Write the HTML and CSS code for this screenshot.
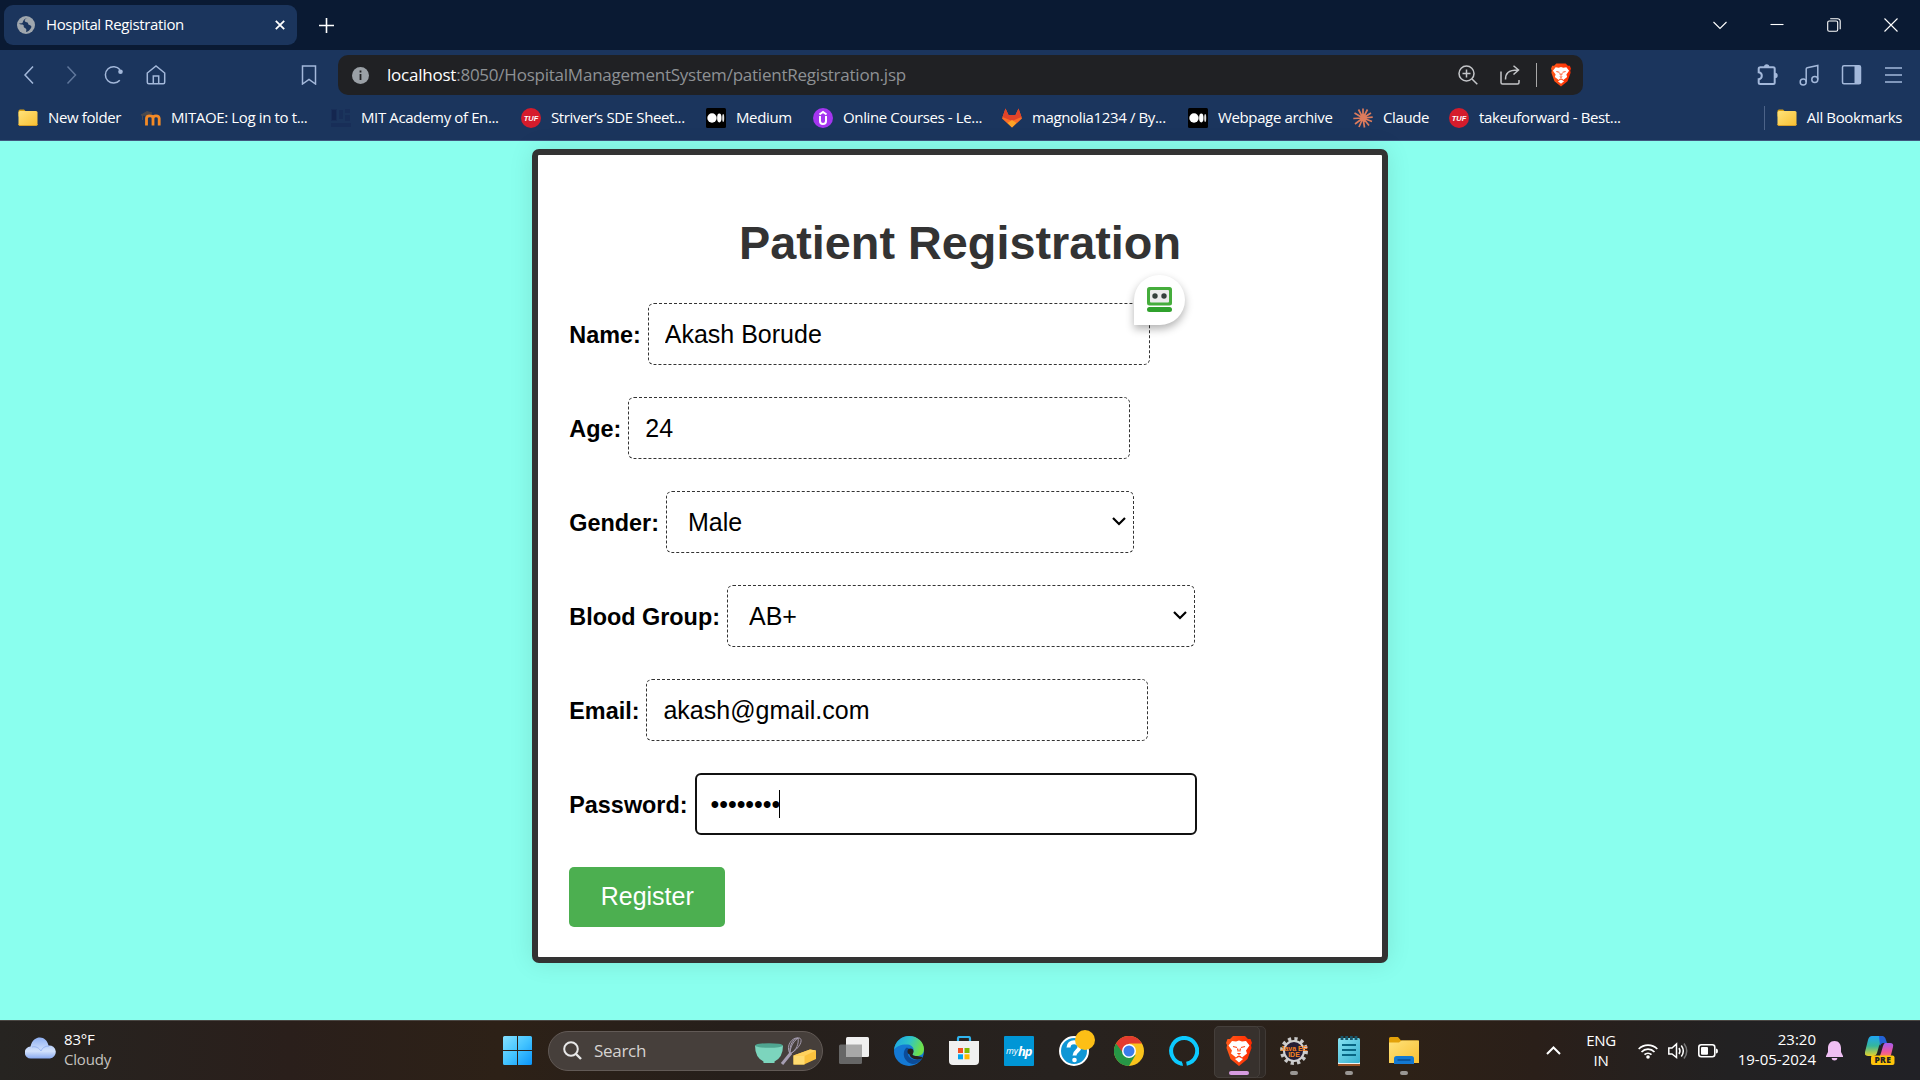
FILE: index.html
```html
<!DOCTYPE html>
<html lang="en">
<head>
<meta charset="utf-8">
<title>Hospital Registration</title>
<link rel="stylesheet" href="styles.css">
</head>
<body>
<svg width="0" height="0" class="defs">
  <defs>
    <linearGradient id="gFolder" x1="0" y1="0" x2="1" y2="1"><stop offset="0" stop-color="#ffe27a"/><stop offset="1" stop-color="#f8c033"/></linearGradient>
    <linearGradient id="gWin" x1="0" y1="0" x2="1" y2="1"><stop offset="0" stop-color="#85e0ff"/><stop offset=".5" stop-color="#44c4ff"/><stop offset="1" stop-color="#0a95fa"/></linearGradient>
    <linearGradient id="gCloud" x1="0" y1="0" x2="0" y2="1"><stop offset="0" stop-color="#8fb0f2"/><stop offset=".65" stop-color="#d3e2fc"/><stop offset="1" stop-color="#8aaaf0"/></linearGradient>
    <linearGradient id="gEdge" x1="0" y1="0" x2="1" y2=".3"><stop offset="0" stop-color="#1aa0e8"/><stop offset=".55" stop-color="#2fc5c8"/><stop offset="1" stop-color="#6de04a"/></linearGradient>
    <linearGradient id="gBrave" x1="0" y1="0" x2="1" y2="0"><stop offset="0" stop-color="#ff5a1a"/><stop offset="1" stop-color="#ff2a00"/></linearGradient>
    <linearGradient id="gNote" x1="0" y1="0" x2="1" y2="1"><stop offset="0" stop-color="#86e2f2"/><stop offset="1" stop-color="#37b0ce"/></linearGradient>
    <linearGradient id="gCopA" x1="0" y1="0" x2="0" y2="1"><stop offset="0" stop-color="#1fa6f5"/><stop offset=".5" stop-color="#35b69b"/><stop offset="1" stop-color="#e8d22a"/></linearGradient>
    <linearGradient id="gCopB" x1="0" y1="0" x2="0" y2="1"><stop offset="0" stop-color="#a45cf0"/><stop offset=".6" stop-color="#f0569a"/><stop offset="1" stop-color="#ff8a4c"/></linearGradient>
    <symbol id="folder" viewBox="0 0 20 20"><path d="M.5 3a1.500 1.500 0 0 1 1.500-1.500h4l2 2h10v5H.5z" fill="#d9a012"/><rect x=".5" y="3" width="19" height="14.500" rx="1.500" fill="url(#gFolder)"/><path d="M.5 16q0 1.500 1.500 1.500h16q1.500 0 1.500-1.500" fill="none" stroke="#d9a12a"/></symbol>
    <symbol id="medium" viewBox="0 0 20 20"><rect width="20" height="20" rx="1.500" fill="#000"/><circle cx="6" cy="10" r="4.700" fill="#fff"/><ellipse cx="13.300" cy="10" rx="2.200" ry="4.400" fill="#fff"/><ellipse cx="17.200" cy="10" rx="1" ry="3.900" fill="#ddd"/></symbol>
    <symbol id="lion" viewBox="0 0 26 30"><path d="M7 0h12l3 3 2.500 0 1.500 4-1 2 .5 3-4 11-8.500 7-8.500-7-4-11 .5-3-1-2 1.500-4L4 3z" fill="url(#gBrave)"/><path d="M6 5l4 .500 3-.900 3 .900 4-.500 3.500 4.500-3.500 5 1 3-5 4-1.500-1.500-1.500-.600-1.500.600L10 21.500l-5-4 1-3-3.500-5zM9 23l4-2 4 2-4 3.500z" fill="#fff"/><path d="M7 10.500l4 1M19 10.500l-4 1M11.500 12.500l.8 3M14.500 12.500l-.8 3" fill="none" stroke="#ff4718" stroke-width="1.200"/><path d="M10.800 17h4.400L13 19z" fill="#ff4718"/></symbol>
  </defs>
</svg>

<header class="tabs">
  <div class="tab">
    <svg class="globe" width="18" height="18" viewBox="0 0 18 18"><circle cx="9" cy="9" r="9" fill="#9fa6ad"/><path d="M10.500 2C8.500 2.500 7 4 8 5.500c1 1 2.500.3 3 1.500.3 1 .2 1.700 1.500 2 1.500.3 2.500 1.500 1.500 3-1 1.700-2.500 3.500-5 4 .3-1.500.8-2.500-.3-3.500-1-.8-2.200-1-2-2.500.2-1-.7-1.500-2-1.500-1.200 0-2.200-.3-3-1 1.500-.2 3.300.2 4-1C6.200 5 7 2.500 10.500 2z" fill="#1b355d"/></svg>
    <span class="tab-title ui">Hospital Registration</span>
    <svg class="tab-close" width="10" height="10" viewBox="0 0 10 10"><path d="M.8.8l8.400 8.400M9.200.8L.8 9.200" stroke="#fff" stroke-width="1.800"/></svg>
  </div>
  <svg class="plus" width="15" height="15" viewBox="0 0 15 15"><path d="M7.500 0v15M0 7.500h15" stroke="#fff" stroke-width="1.600"/></svg>
  <div class="window-buttons">
    <svg width="14" height="14" viewBox="0 0 14 14"><path d="M.5 4L7 10.500 13.500 4"/></svg>
    <svg width="14" height="14" viewBox="0 0 14 14"><path d="M.5 6.500h13"/></svg>
    <svg width="14" height="14" viewBox="0 0 14 14"><rect x=".7" y="3" width="10" height="10.300" rx="1.500"/><path d="M3.200.7h7.500a2.500 2.500 0 0 1 2.500 2.500v8"/></svg>
    <svg width="14" height="14" viewBox="0 0 14 14"><path d="M.5.5l13 13M13.500.5l-13 13"/></svg>
  </div>
</header>

<nav class="toolbar">
  <div class="nav-icons">
    <svg width="20" height="20" viewBox="0 0 20 20"><path d="M13 1.500L5 10l8 8.500"/></svg>
    <svg class="dim" width="20" height="20" viewBox="0 0 20 20"><path d="M5.500 1.500l8 8.500-8 8.500"/></svg>
    <svg width="20" height="20" viewBox="0 0 20 20"><path d="M15.800 15.200a8.200 8.200 0 1 1 .200-10.500"/><circle cx="16.500" cy="6.800" r="2.300" fill="#a3b8da" stroke="none"/></svg>
    <svg width="20" height="20" viewBox="0 0 20 20"><path d="M1.300 8L10 1l8.700 7v9.200q0 1.500-1.500 1.500H2.800q-1.500 0-1.500-1.500zM7.300 18.500v-7.500h5.400v7.500"/></svg>
  </div>
  <svg class="mark" width="16" height="20" viewBox="0 0 16 20"><path d="M1.500 1h13v18L8 14.500 1.500 19z"/></svg>
  <div class="address">
    <svg width="17" height="17" viewBox="0 0 17 17"><circle cx="8.500" cy="8.500" r="8.500" fill="#9aa0a6"/><path d="M8.500 7v6M8.500 3.500v2" stroke="#202124" stroke-width="1.800"/></svg>
    <span class="url ui"><b>localhost</b>:8050/HospitalManagementSystem/patientRegistration.jsp</span>
    <div class="address-actions">
      <svg width="20" height="20" viewBox="0 0 20 20"><circle cx="8.500" cy="8.500" r="7.500"/><path d="M14 14l5.300 5.300M8.500 4.500v8M4.500 8.500h8"/></svg>
      <svg width="20" height="20" viewBox="0 0 20 20"><path d="M1 6.500V17.500q0 1.500 1.500 1.500H17.500q1.500 0 1.500-1.500v-2.500M5.500 14.500C5.500 8.500 8 5 18 5M13.500.8L18.500 5l-5 4.500"/></svg>
      <i class="divider"></i>
      <svg class="shield" width="20" height="24"><use href="#lion"/></svg>
    </div>
  </div>
  <div class="tools">
    <svg width="21" height="22" viewBox="0 0 21 22"><path d="M3 3.200H16.200Q17.700 3.200 17.700 4.700V18.500Q17.700 20 16.200 20H3.200Q1.700 20 1.700 18.500V15.200Q4.800 14.800 4.800 11.800T1.700 8.300V4.700Q1.700 3.200 3.200 3.200z" stroke-width="2"/><path d="M7 3a2.700 2.700 0 0 1 5.400 0zM18 8.700a2.700 2.700 0 0 1 0 5.400z" fill="#a3b8da" stroke="none"/></svg>
    <svg width="21" height="22" viewBox="0 0 21 22"><circle cx="4.200" cy="18" r="3"/><circle cx="15.800" cy="15.500" r="3"/><path d="M7.200 18V5Q7.200 4 8.200 3.700L18.800 1.500v14"/></svg>
    <svg width="21" height="22" viewBox="0 0 21 22"><rect x="1.500" y="1.800" width="18" height="18" rx="1.500"/><path d="M13.500 1.500h4.500q2 0 2 2v14.500q0 2-2 2h-4.500z" fill="#a3b8da" stroke="none"/></svg>
    <svg width="21" height="22" viewBox="0 0 21 22"><path d="M2 4h17M2 11h17M2 18h17"/></svg>
  </div>
</nav>

<nav class="bookmarks ui">
  <a class="bm"><svg><use href="#folder"/></svg><span>New folder</span></a>
  <a class="bm"><svg viewBox="0 0 20 20"><path d="M0 7l6-3.500L11 5 5.500 7.500zM1.500 7v5" fill="#4a4a4f" stroke="#4a4a4f"/><path d="M5.500 17.500V10.500q0-2.700 3.200-2.700h.600q2.700 0 2.700 2.700V17.500M12 10.500q0-2.700 3-2.700t3.200 2.700V17.500" fill="none" stroke="#f48a26" stroke-width="2.800"/></svg><span>MITAOE: Log in to t...</span></a>
  <a class="bm"><svg viewBox="0 0 20 20"><path d="M0 1h6v12H0zM8 2h4v9H8zM14 1h5v4h-5zM14 7h5v6h-5zM0 15h20v4H0z" fill="#182e58"/><path d="M1 2h4v10H1z" fill="#14264f"/></svg><span>MIT Academy of En...</span></a>
  <a class="bm"><svg viewBox="0 0 20 20"><circle cx="10" cy="10" r="10" fill="#d51c2c"/><text x="10" y="12.500" class="tuf">TUF</text></svg><span>Striver’s SDE Sheet...</span></a>
  <a class="bm"><svg><use href="#medium"/></svg><span>Medium</span></a>
  <a class="bm"><svg viewBox="0 0 20 20"><circle cx="10" cy="10" r="10" fill="#a435f0"/><path d="M7 8v5q0 3 3 3t3-3V8M6.500 6.500L10 4l3.500 2.500" fill="none" stroke="#fff" stroke-width="2"/></svg><span>Online Courses - Le...</span></a>
  <a class="bm"><svg viewBox="0 0 20 20"><path d="M3.500.5l3 6.500h7l3-6.500L20 10.500 10 19.500 0 10.500z" fill="#fc6d26"/><path d="M3.500.5l3 6.500h7l3-6.500L19.500 9 10 13 .5 9z" fill="#e24329"/><path d="M5.500 15L10 12l4.500 3L10 19.500z" fill="#fca326"/></svg><span>magnolia1234 / By...</span></a>
  <a class="bm"><svg><use href="#medium"/></svg><span>Webpage archive</span></a>
  <a class="bm"><svg viewBox="0 0 20 20"><path d="M10 10V.5M10 10l4.500-8.500M10 10l8-5M10 10l9.700-.8M10 10l9 3.500M10 10l6 7.500M10 10l1.500 9.500M10 10l-4 9M10 10l-8 6M10 10L.3 10.500M10 10L1.500 5M10 10L5.500 1.500" stroke="#dd7b5c" stroke-width="1.700"/></svg><span>Claude</span></a>
  <a class="bm"><svg viewBox="0 0 20 20"><circle cx="10" cy="10" r="10" fill="#d51c2c"/><text x="10" y="12.500" class="tuf">TUF</text></svg><span>takeuforward - Best...</span></a>
  <a class="bm all"><svg><use href="#folder"/></svg><span>All Bookmarks</span></a>
</nav>

<main class="page">
  <form class="card">
    <h1>Patient Registration</h1>
    <div class="row"><label for="name">Name:</label>
      <div class="field-wrap"><input id="name" class="field" type="text" value="Akash Borude">
        <div class="roboform"><svg width="25" height="25" viewBox="0 0 25 25"><rect width="25" height="18.500" rx="2.500" fill="#45ad3c"/><rect x="3" y="3" width="19" height="12.500" rx="1" fill="#ececec"/><circle cx="8" cy="9" r="2.700" fill="#35403c"/><circle cx="17" cy="9" r="2.700" fill="#35403c"/><rect y="20" width="25" height="5" rx="2.500" fill="#2fa12c"/></svg></div>
      </div></div>
    <div class="row"><label for="age">Age:</label><input id="age" class="field" type="text" value="24"></div>
    <div class="row"><label for="gender">Gender:</label><div class="field pick"><select id="gender"><option>Male</option></select><svg width="14" height="9" viewBox="0 0 14 9"><path d="M1 1l6 6 6-6"/></svg></div></div>
    <div class="row"><label for="blood">Blood Group:</label><div class="field pick"><select id="blood"><option>AB+</option></select><svg width="14" height="9" viewBox="0 0 14 9"><path d="M1 1l6 6 6-6"/></svg></div></div>
    <div class="row"><label for="email">Email:</label><input id="email" class="field" type="text" value="akash@gmail.com"></div>
    <div class="row"><label>Password:</label><div class="field focused"><span>••••••••</span><i class="caret"></i></div></div>
    <button type="button" class="register">Register</button>
  </form>
</main>

<footer class="taskbar ui">
  <div class="weather">
    <svg width="31" height="22" viewBox="0 0 31 22"><path d="M6 21.500a6 6 0 0 1-.5-12C7 3 11 .5 15 .5s7.500 3 8.500 8a6.500 6.500 0 0 1 1.500 13z" fill="url(#gCloud)"/><path d="M7 10c4-1 7 1 9 4 1-3 4-5 8-5" fill="none" stroke="#7d9feb" stroke-width="1" opacity=".6"/></svg>
    <div class="lift"><p>83°F</p><p class="soft">Cloudy</p></div>
  </div>
  <svg class="start" width="30" height="30" viewBox="0 0 30 30"><path d="M1.500 0H14v14H0V1.500Q0 0 1.500 0zM15 0h12.500Q29 0 29 1.500V14H15zM0 15h14v14H1.500Q0 29 0 27.500zM15 15h14v12.500q0 1.500-1.500 1.500H15z" fill="url(#gWin)"/></svg>
  <div class="search">
    <svg width="19" height="19" viewBox="0 0 19 19"><circle cx="8" cy="8" r="6.800" fill="none" stroke="#e8e8e8" stroke-width="2"/><path d="M13 13l5 5" stroke="#e8e8e8" stroke-width="2.400"/></svg>
    <span>Search</span>
    <svg class="baking" width="61" height="28" viewBox="0 0 61 28"><path d="M0 8.500h28q0 12-8.500 16v1.500h-11v-1.500Q0 20.500 0 8.500z" fill="#7cd5bd"/><ellipse cx="14" cy="8.500" rx="13.700" ry="2.300" fill="#4fa590"/><g fill="none" stroke="#a69eb2" stroke-width="1"><path d="M36 16l-9 11" stroke-width="3"/><path d="M35 17C34 8 38 2 43 1s5 8-8 16M35 17c0-7 3-12 8-16M35 17c7-4 9-11 8-16M35 17C30 8 38 0 43 1"/></g><path d="M38.500 18.500L55 12.500l6 1v8.500l-12 5.500H38.500z" fill="#fac23e"/><path d="M38.500 18.500l11 .5v8.500H38.500z" fill="#ffdb70"/><path d="M38.500 18.500L55 12.500l6 1-11.500 5.500z" fill="#ffd25e"/></svg>
  </div>
  <div class="apps">
    <div class="app"><svg width="30" height="30" viewBox="0 0 30 30"><rect x="0" y="8.500" width="23" height="19.500" rx="1.500" fill="#666"/><rect x="7" y="1" width="23" height="20" rx="1.500" fill="#f0f0f0"/><path d="M7 8.500h16V21H7z" fill="#a8a8a8"/></svg></div>
    <div class="app"><svg width="30" height="30" viewBox="0 0 30 30"><circle cx="15" cy="15" r="15" fill="#1479d4"/><path d="M0 14C1 5 8 0 15 0c9 0 15 6.500 15 13 0 5-3.500 7-7 7-4 0-5.500-1.500-4-3.500 2-4-1-7.500-5-8C8 8 2 10 0 14z" fill="url(#gEdge)"/><path d="M12 12c-5 6-1 15 7 16 3 0 7-2 9-5.500-6 3-13 .5-14-4-.5-2 .5-4 2-5-1.500-1.500-3-2-4-1.500z" fill="#0c4c98"/><path d="M19 16.500c-1.500 2 0 3.500 4 3.500l5 1q1 .5 0 1.500c-6 2.500-12.500 0-12.500-5z" fill="#27211e"/><circle cx="16.500" cy="15.500" r="3" fill="#27211e"/></svg></div>
    <div class="app"><svg width="30" height="30" viewBox="0 0 30 30"><path d="M9 5.500V2.500Q9 1 10.500 1h9Q21 1 21 2.500v3" fill="none" stroke="#30b4ee" stroke-width="2.200"/><path d="M0 5h30v20q0 4-4 4H4q-4 0-4-4z" fill="#f0f0f0"/><path d="M9 12h5v5H9z" fill="#f25022"/><path d="M15.500 12h5v5h-5z" fill="#7fba00"/><path d="M9 18.300h5v5H9z" fill="#00a4ef"/><path d="M15.500 18.300h5v5h-5z" fill="#ffb900"/></svg></div>
    <div class="app"><svg width="30" height="30" viewBox="0 0 30 30"><rect width="30" height="30" rx="1" fill="#0096d6"/><text x="2" y="18" class="my">my</text><text x="14" y="19.500" class="hp">hp</text></svg></div>
    <div class="app"><svg class="over" width="30" height="30" viewBox="0 0 30 30"><circle cx="15" cy="15" r="14" fill="#0e96d5" stroke="#fff" stroke-width="2"/><path d="M9.500 11.500c0-7 11-7 11-.5 0 4-5 4-5 8.500" fill="none" stroke="#fff" stroke-width="4"/><circle cx="15.500" cy="24" r="2.300" fill="#fff"/><circle cx="26" cy="4" r="10" fill="#fdbf16"/></svg></div>
    <div class="app"><svg width="30" height="30" viewBox="0 0 30 30"><circle cx="15" cy="15" r="15" fill="#f9c31c"/><path d="M15 15L2 7.500A15 15 0 0 0 15 30l6.500-11z" fill="#269746"/><path d="M2 7.500a15 15 0 0 1 26 0H15l-5.500 10z" fill="#e33b2e"/><circle cx="15" cy="15" r="7" fill="#fff"/><circle cx="15" cy="15" r="5.500" fill="#3a7cec"/></svg></div>
    <div class="app"><svg width="30" height="30" viewBox="0 0 30 30"><path d="M12.800 27.700A13 13 0 1 1 17.500 27.700" fill="none" stroke="#0ccaff" stroke-width="4"/><path d="M12 25.500q2 1 2 4.500l-3-1z" fill="#0ccaff"/></svg></div>
    <div class="app active"><svg width="26" height="30"><use href="#lion"/></svg><i class="run"></i></div>
    <div class="app"><svg width="28" height="28" viewBox="0 0 28 28"><circle cx="14" cy="14" r="11.800" fill="none" stroke="#c9c9c9" stroke-width="4.400" stroke-dasharray="3.100 3.078"/><circle cx="14" cy="14" r="10" fill="#251d35" stroke="#d0d0d0" stroke-width="2"/><text x="14" y="13.500" class="java">Java EE</text><text x="14" y="20" class="java">IDE</text></svg><i class="run"></i></div>
    <div class="app"><svg width="22" height="30" viewBox="0 0 22 30"><path d="M0 24h22v6H0z" fill="#9b5426"/><path d="M0 24h22v4H0z" fill="#f2f2f2"/><rect y="2" width="22" height="25" rx="1.500" fill="url(#gNote)"/><path d="M4 9h14M4 14h14M4 19h14" stroke="#086683" stroke-width="1.800"/><path d="M4 0v4M8.700 0v4M13.400 0v4M18 0v4" stroke="#18566a" stroke-width="2.800"/></svg><i class="run"></i></div>
    <div class="app"><svg width="30" height="27" viewBox="0 0 30 27"><path d="M0 1.500Q0 0 1.500 0H9l3 3.500h16.500Q30 3.500 30 5v6H0z" fill="#e3a109"/><path d="M0 5.500h10l2.500-2H30V26H0z" fill="url(#gFolder)"/><path d="M5 27v-5.500Q5 19 7.500 19h15q2.500 0 2.500 2.500V27z" fill="#1378d1"/><path d="M8.500 23h13" stroke="#094d91" stroke-width="1.500"/></svg><i class="run"></i></div>
  </div>
  <div class="tray">
    <svg class="up" width="15" height="9" viewBox="0 0 15 9"><path d="M1 8l6.500-6.500L14 8" fill="none" stroke="#fff" stroke-width="2"/></svg>
    <div class="lang"><p>ENG</p><p>IN</p></div>
    <svg class="wifi" width="20" height="16" viewBox="0 0 20 16"><g fill="none" stroke="#fff" stroke-width="1.700"><path d="M.7 6a13 13 0 0 1 18.600 0M3.500 9a9 9 0 0 1 13 0M6.500 11.700a5 5 0 0 1 7 0"/></g><circle cx="10" cy="14" r="1.800" fill="#fff"/></svg>
    <svg class="sound" width="20" height="18" viewBox="0 0 20 18"><g fill="none" stroke="#fff" stroke-width="1.500"><path d="M.8 6H4l4.500-4v13.500L4 12H.8zM11 6q2 3 0 6M13.300 3.500q4 5.500 0 11"/><path d="M16 1.500q5.500 7.500 0 15" stroke="#777"/></g></svg>
    <svg class="battery" width="20" height="14" viewBox="0 0 20 14"><rect x=".8" y=".8" width="16" height="12" rx="2.500" fill="none" stroke="#fff" stroke-width="1.600"/><rect x="3" y="3" width="7" height="7.700" rx="1" fill="#fff"/><path d="M18 4.500q2 0 2 2.500t-2 2.500z" fill="#fff" /></svg>
    <div class="clock lift"><p>23:20</p><p>19-05-2024</p></div>
    <svg class="bell" width="17" height="20" viewBox="0 0 17 20"><path d="M8.500 0C4 0 2 3.500 2 7v4L0 15v1h17v-1l-2-4V7c0-3.500-2-7-6.500-7zM5.500 17h6q-.5 2.500-3 2.500t-3-2.500z" fill="#efbff3"/></svg>
    <svg class="copilot" width="30" height="29" viewBox="0 0 30 29"><path d="M7 0h9q3 0 4 4l1 3h-4q-2 0-3 3l-2 7q-1 3-4 3H3q-4 0-3-4L3 4q1-4 4-4z" fill="url(#gCopA)"/><path d="M14 0h3q3 0 4 4l1 3h-4q-2 0-3 3z" fill="#2362d6"/><path d="M20 7h5q4 0 3 4l-2 8q-1 3-5 3h-8q2-1 3-5l2-7q1-3 2-3z" fill="url(#gCopB)"/><rect x="6" y="19.500" width="23.500" height="9.500" rx="2" fill="#fec30a"/><text x="17.800" y="27" class="pre">PRE</text></svg>
  </div>
</footer>
</body>
</html>
```
FILE: styles.css
```css
* { box-sizing: border-box; }
body { margin: 0; width: 1920px; height: 1080px; overflow: hidden; display: flex; flex-direction: column; background: #8affee; font-family: "Liberation Sans", Arial, sans-serif; }
p { margin: 0; }
svg { display: block; flex: none; }
.defs { position: absolute; }
.ui { font-family: "Open Sans", "Noto Sans", sans-serif; }

.tabs { height: 50px; flex: none; display: flex; align-items: center; background: #0a1a33; }
.tab { width: 293px; height: 40px; margin-left: 4px; padding: 0 12px 0 13px; border-radius: 9px; background: #1b355d; display: flex; align-items: center; }
.tab-title { margin-left: 11px; padding-bottom: 2px; color: #fff; font-size: 15px; letter-spacing: -.36px; white-space: nowrap; }
.tab-close { margin-left: auto; }
.plus { margin-left: 22px; }
.window-buttons { margin-left: auto; display: flex; gap: 43px; padding-right: 22px; }
.window-buttons svg { fill: none; stroke: #fff; stroke-width: 1.1; }

.toolbar { height: 50px; flex: none; display: flex; align-items: center; background: #1b355d; }
.toolbar svg { fill: none; stroke: #a3b8da; stroke-width: 1.5; }
.nav-icons { display: flex; gap: 22px; padding-left: 20px; }
.nav-icons .dim { opacity: .5; }
.mark { margin-left: 135px; }
.address { width: 1245px; height: 40px; margin-left: 21px; padding: 0 12px 0 14px; border-radius: 10px; background: #202124; display: flex; align-items: center; }
.toolbar .address > svg { stroke: none; }
.toolbar .address > svg path { stroke: #202124; }
.url { margin-left: 18px; padding-bottom: 2px; color: #8e9194; font-size: 17px; letter-spacing: -.23px; white-space: nowrap; }
.url b { color: #fff; font-weight: 400; }
.address-actions { margin-left: auto; display: flex; align-items: center; }
.toolbar .address-actions svg { stroke: #c3c5c8; margin-right: 22px; }
.address-actions .divider { width: 1px; height: 24px; margin-right: 14px; margin-left: -6px; background: #a8a8a8; }
.toolbar .address-actions .shield { margin: 0; stroke: none; }
.tools { display: flex; gap: 21px; margin-left: auto; padding-right: 16px; }

.bookmarks { height: 41px; flex: none; display: grid; grid-template-columns: 123px 190px 190px 185px 107px 189px 186px 165px 96px 180px 1fr; padding: 0 18px 5px; background: #1b355d; border-bottom: 1px solid #40587f; color: #fff; font-size: 15px; }
.bm { display: flex; align-items: center; gap: 10px; white-space: nowrap; letter-spacing: -.37px; }
.bm span { padding-bottom: 2px; }
.bm svg { width: 20px; height: 20px; }
.bm.all { justify-self: end; border-left: 1px solid #4c6388; padding-left: 12px; height: 24px; align-self: center; }
.tuf { font: italic 900 7.5px "Liberation Sans", sans-serif; fill: #fff; text-anchor: middle; letter-spacing: 0; }

.page { flex: 1; display: flex; justify-content: center; align-items: flex-start; padding-top: 8px; background: #8affee; }
.card { width: 856px; height: 814px; border: 6px solid #333; border-radius: 7px; background: #fff; padding: 31.25px; box-shadow: 0 0 25px rgba(0,0,0,.1); }
h1 { margin: 29.5px 0 33px; font-size: 46.8px; line-height: 54px; color: #333; text-align: center; }
.row { display: flex; align-items: center; height: 62.5px; margin-bottom: 31.5px; }
.row label { padding-top: 2px; font-size: 23.4px; font-weight: 700; margin-right: 7px; white-space: nowrap; }
.field { width: 502px; height: 62.5px; padding: 0 16px; border: 1px dashed #333; border-radius: 6px; background: #fff; color: #000; font: 25px "Liberation Sans", Arial, sans-serif; outline: none; }
.pick { width: 468.5px; display: flex; align-items: center; padding: 0 7px 0 21px; }
.pick select { flex: 1; appearance: none; border: 0; padding: 0; background: none; color: #000; font: inherit; }
.pick svg { margin-bottom: 2px; fill: none; stroke: #000; stroke-width: 2.2; }
.field-wrap { position: relative; }
.roboform { position: absolute; left: 486px; top: -28px; width: 51px; height: 50px; border-radius: 25px 25px 25px 0; background: #fff; box-shadow: 0 4px 8px rgba(0,0,0,.3); display: flex; align-items: center; justify-content: center; }
.focused { display: flex; align-items: center; padding-left: 14px; border: 2.5px solid #111; }
.focused span { letter-spacing: -.05px; }
.caret { width: 1px; height: 28px; margin-left: -1px; background: #000; }
.register { width: 156px; height: 60px; border: 0; border-radius: 5px; background: #4caf50; color: #fff; font: 25px "Liberation Sans", Arial, sans-serif; display: block; }

.taskbar { height: 60px; flex: none; display: flex; align-items: center; border-top: 1px solid #4a4743; background: linear-gradient(90deg, #262421, #2a1f1b 15%, #2d2117 26%, #261f1b 38%, #27221f 55%, #2d2117 73%, #2a1f19 80%, #222122 90%, #212126); color: #fff; font-size: 15px; line-height: 20px; }
.weather { width: 503px; padding-left: 25px; display: flex; align-items: center; gap: 8px; letter-spacing: -.2px; }
.weather > svg { margin-top: -6px; }
.lift { padding-bottom: 4px; }
.soft { color: #c5c2bf; }
.search { width: 275px; height: 40px; margin-left: 15px; padding: 0 6px 0 14px; display: flex; align-items: center; border: 1px solid #625a56; border-radius: 20px; background: #463f3b; color: #d6d3d1; font-size: 17px; }
.search span { margin-left: 12px; letter-spacing: -.3px; }
.baking { margin-left: auto; }
.apps { display: flex; align-items: center; margin-left: 3.5px; }
.app { width: 55px; height: 50px; position: relative; display: flex; align-items: center; justify-content: center; }
.over { overflow: visible; }
.run { position: absolute; bottom: 1px; width: 8px; height: 4px; border-radius: 2px; background: #9a9794; }
.active::before { content: ""; position: absolute; left: 2px; top: 0; width: 50px; height: 50px; border: 1px solid #403a36; border-radius: 5px; background: #302a26; }
.active::after { content: ""; position: absolute; left: 2px; top: 0; width: 44px; height: 50px; border: 1px solid #453f3b; border-radius: 5px; background: #37312d; }
.active svg, .active .run { z-index: 1; }
.active svg { position: relative; }
.active .run { width: 20px; background: #d79be0; }
.my { font: italic 9px "Open Sans", sans-serif; fill: #fff; }
.hp { font: italic 700 13px "Open Sans", sans-serif; fill: #fff; letter-spacing: -1px; }
.java { font: 700 7px "Liberation Sans", sans-serif; fill: #f58220; text-anchor: middle; }
.tray { margin-left: auto; display: flex; align-items: center; padding-right: 25px; }
.lang { width: 32px; margin-left: 24px; padding-bottom: 2px; text-align: center; letter-spacing: -.3px; }
.wifi { margin-left: 21px; }
.sound { margin-left: 10px; }
.battery { margin-left: 10px; }
.clock { width: 98px; text-align: right; letter-spacing: 0; white-space: nowrap; }
.bell { margin-left: 10px; }
.copilot { margin-left: 22px; }
.pre { font: 800 8.5px "Open Sans", sans-serif; fill: #222; text-anchor: middle; letter-spacing: .3px; }
```
